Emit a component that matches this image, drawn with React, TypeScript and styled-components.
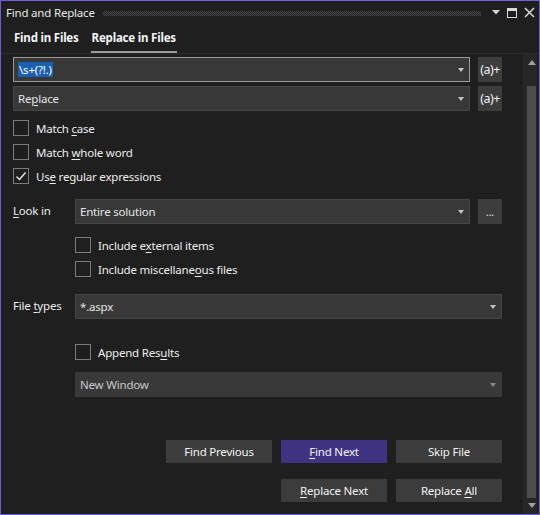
import styled, { createGlobalStyle } from "styled-components";
import { ReactNode } from "react";

const uiFont = `"Noto Sans", "Open Sans", sans-serif`;
const textColor = "#f1f1f1";
const panelBg = "#1f1f1f";
const fieldBg = "#383838";
const accent = "#6c5fd6";

const GlobalStyle = createGlobalStyle`
  * { box-sizing: border-box; }
  body {
    margin: 0;
    background: ${panelBg};
    font-family: ${uiFont};
    font-size: 11.5px;
    letter-spacing: -0.2px;
    color: ${textColor};
  }
`;

const Window = styled.div`
  width: 540px;
  height: 515px;
  border: 1px solid ${accent};
  background: ${panelBg};
  display: flex;
  flex-direction: column;
  overflow: hidden;
`;

const TitleBar = styled.div`
  height: 23px;
  display: flex;
  align-items: center;
  padding: 0 4px 0 5px;
  gap: 8px;
`;

const Title = styled.span`
  color: #e8e8e8;
  white-space: nowrap;
`;

const Grip = styled.div`
  flex: 1;
  height: 5px;
  margin-top: 1px;
  background: repeating-conic-gradient(#4c4c4c 0 25%, transparent 0 50%) 0 0 /
    2px 2px;
`;

const TitleIcons = styled.div`
  display: flex;
  align-items: center;
  gap: 7px;
  margin-left: 3px;
`;

const Tabs = styled.div`
  height: 30px;
  display: flex;
  align-items: stretch;
  gap: 11px;
  padding-left: 12px;
  border-bottom: 1px solid #2c2c2c;
`;

const Tab = styled.div<{ $active?: boolean }>`
  display: flex;
  align-items: center;
  padding: 0 1px;
  font-weight: 700;
  color: #f4f4f4;
  border-bottom: 2px solid ${({ $active }) => ($active ? "#9c9c9c" : "transparent")};
`;

const Body = styled.div`
  flex: 1;
  display: flex;
`;

const Content = styled.div`
  flex: 1;
  padding: 3px 21px 0 12px;
  display: flex;
  flex-direction: column;
`;

const Row = styled.div<{ $mt?: number; $indent?: number }>`
  display: flex;
  align-items: center;
  margin-top: ${({ $mt }) => $mt ?? 0}px;
  margin-left: ${({ $indent }) => $indent ?? 0}px;
`;

const FieldLabel = styled.span`
  width: 62px;
  flex-shrink: 0;
  color: #ececec;
  align-self: flex-start;
  padding-top: 4px;
`;

const Combo = styled.div<{ $focused?: boolean; $disabled?: boolean }>`
  flex: 1;
  height: 25px;
  display: flex;
  align-items: center;
  padding: 0 5px 0 3px;
  background: ${({ $disabled }) => ($disabled ? "#393939" : fieldBg)};
  border: 1px solid
    ${({ $focused, $disabled }) =>
      $focused ? "#9a9a9a" : $disabled ? "#393939" : "#454545"};
  color: ${({ $disabled }) => ($disabled ? "#c9c9c9" : "#e6e6e6")};
`;

const ComboText = styled.span`
  flex: 1;
  padding-left: 1px;
  white-space: nowrap;
`;

const Selected = styled.span`
  background: #1b5fb0;
  color: #ffffff;
  line-height: 16px;
  padding: 0 1px;
`;

const DropArrow = styled.span<{ $dim?: boolean }>`
  width: 0;
  height: 0;
  border-left: 3.5px solid transparent;
  border-right: 3.5px solid transparent;
  border-top: 4px solid ${({ $dim }) => ($dim ? "#8a8a8a" : "#c4c4c4")};
  margin-top: 1px;
`;

const SideButton = styled.div<{ $small?: boolean }>`
  width: 24px;
  height: 25px;
  margin-left: 8px;
  background: #3d3d3d;
  display: flex;
  align-items: center;
  justify-content: center;
  color: #f0f0f0;
  font-size: ${({ $small }) => ($small ? "10px" : "12.5px")};
  letter-spacing: ${({ $small }) => ($small ? "0" : "-0.5px")};
`;

const CheckRow = styled(Row)`
  height: 24px;
  gap: 7px;
`;

const Box = styled.span`
  width: 16px;
  height: 16px;
  border: 1px solid #7a7a7a;
  display: flex;
  align-items: center;
  justify-content: center;
  flex-shrink: 0;
`;

const CheckLabel = styled.span`
  color: #ededed;
  white-space: nowrap;
`;

const Key = styled.u`
  text-decoration: underline;
  text-underline-offset: 2px;
`;

const ButtonRow = styled.div<{ $mt: number }>`
  display: flex;
  justify-content: flex-end;
  gap: 9px;
  margin-top: ${({ $mt }) => $mt}px;
`;

const Button = styled.div<{ $primary?: boolean }>`
  width: 106px;
  height: 23px;
  display: flex;
  align-items: center;
  justify-content: center;
  background: ${({ $primary }) => ($primary ? "#403482" : "#3c3c3c")};
  color: #f2f2f2;
  white-space: nowrap;
`;

const ScrollBar = styled.div`
  width: 14px;
  margin-right: 2px;
  background: #272727;
  display: flex;
  flex-direction: column;
  align-items: flex-end;
`;

const ArrowZone = styled.div<{ $h: number; $pt: number }>`
  height: ${({ $h }) => $h}px;
  width: 10px;
  display: flex;
  justify-content: center;
  padding-top: ${({ $pt }) => $pt}px;
`;

const Thumb = styled.div`
  flex: 1;
  width: 9px;
  margin-right: 1px;
  background: #4d4d4d;
`;

const Tri = styled.span<{ $up?: boolean }>`
  width: 0;
  height: 0;
  border-left: 4.5px solid transparent;
  border-right: 4.5px solid transparent;
  ${({ $up }) =>
    $up ? "border-bottom: 5px solid #a0a0a0;" : "border-top: 5px solid #a0a0a0;"}
`;

const Check = () => (
  <svg width="12" height="12" viewBox="0 0 12 12">
    <path d="M1.5 6.5 L4.5 9.5 L10.5 2.5" fill="none" stroke="#e8e8e8" strokeWidth="1.4" />
  </svg>
);

const CheckItem = ({
  checked,
  children,
  indent,
  mt,
}: {
  checked?: boolean;
  children: ReactNode;
  indent?: number;
  mt?: number;
}) => (
  <CheckRow $indent={indent} $mt={mt}>
    <Box>{checked && <Check />}</Box>
    <CheckLabel>{children}</CheckLabel>
  </CheckRow>
);

export default function App() {
  return (
    <>
      <GlobalStyle />
      <Window>
        <TitleBar>
          <Title>Find and Replace</Title>
          <Grip />
          <TitleIcons>
            <svg width="8" height="5" viewBox="0 0 8 5">
              <path d="M0 0 H8 L4 4.5 Z" fill="#d8d8d8" />
            </svg>
            <svg width="10" height="10" viewBox="0 0 10 10">
              <rect x="0.5" y="0.5" width="9" height="9" fill="none" stroke="#d8d8d8" />
              <rect x="0.5" y="0.5" width="9" height="2.5" fill="#d8d8d8" />
            </svg>
            <svg width="11" height="11" viewBox="0 0 11 11">
              <path d="M1 1 L10 10 M10 1 L1 10" stroke="#d8d8d8" strokeWidth="1.5" />
            </svg>
          </TitleIcons>
        </TitleBar>

        <Tabs>
          <Tab>Find in Files</Tab>
          <Tab $active>Replace in Files</Tab>
        </Tabs>

        <Body>
          <Content>
            <Row>
              <Combo $focused>
                <ComboText>
                  <Selected>\s+(?!.)</Selected>
                </ComboText>
                <DropArrow />
              </Combo>
              <SideButton>(a)+</SideButton>
            </Row>
            <Row $mt={4}>
              <Combo>
                <ComboText>
                  Re<Key>p</Key>lace
                </ComboText>
                <DropArrow />
              </Combo>
              <SideButton>(a)+</SideButton>
            </Row>

            <CheckItem mt={5}>
              Match <Key>c</Key>ase
            </CheckItem>
            <CheckItem>
              Match <Key>w</Key>hole word
            </CheckItem>
            <CheckItem checked>
              Us<Key>e</Key> regular expressions
            </CheckItem>

            <Row $mt={11}>
              <FieldLabel>
                <Key>L</Key>ook in
              </FieldLabel>
              <Combo>
                <ComboText>Entire solution</ComboText>
                <DropArrow />
              </Combo>
              <SideButton $small>...</SideButton>
            </Row>

            <CheckItem indent={62} mt={9}>
              Include e<Key>x</Key>ternal items
            </CheckItem>
            <CheckItem indent={62}>
              Include miscellane<Key>o</Key>us files
            </CheckItem>

            <Row $mt={13}>
              <FieldLabel>
                File <Key>t</Key>ypes
              </FieldLabel>
              <Combo>
                <ComboText>*.aspx</ComboText>
                <DropArrow />
              </Combo>
            </Row>

            <CheckItem indent={62} mt={21}>
              Append Res<Key>u</Key>lts
            </CheckItem>

            <Row $mt={8} $indent={62}>
              <Combo $disabled>
                <ComboText>New Window</ComboText>
                <DropArrow $dim />
              </Combo>
            </Row>

            <ButtonRow $mt={43}>
              <Button>Find Previous</Button>
              <Button $primary>
                <span>
                  <Key>F</Key>ind Next
                </span>
              </Button>
              <Button>Skip File</Button>
            </ButtonRow>
            <ButtonRow $mt={16}>
              <Button>
                <span>
                  <Key>R</Key>eplace Next
                </span>
              </Button>
              <Button>
                <span>
                  Replace <Key>A</Key>ll
                </span>
              </Button>
            </ButtonRow>
          </Content>

          <ScrollBar>
            <ArrowZone $h={32} $pt={6}>
              <Tri $up />
            </ArrowZone>
            <Thumb />
            <ArrowZone $h={16} $pt={5}>
              <Tri />
            </ArrowZone>
          </ScrollBar>
        </Body>
      </Window>
    </>
  );
}
